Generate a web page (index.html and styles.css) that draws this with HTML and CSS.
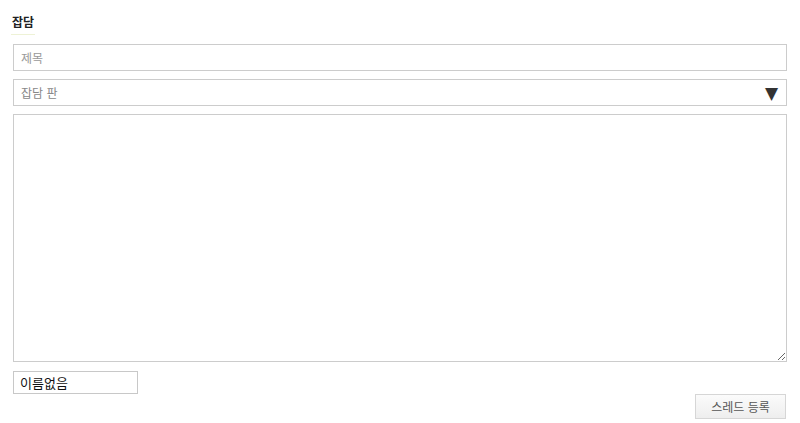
FILE: index.html
```html
<!DOCTYPE html>
<html lang="ko">
<head>
<meta charset="utf-8">
<link rel="stylesheet" href="styles.css">
</head>
<body>
<div class="wrap">
  <div class="title"><span>잡담</span></div>
  <form class="form">
    <input class="field" type="text" placeholder="제목">
    <div class="select">
      <span class="select-text">잡담 판</span>
      <span class="arrow">▼</span>
    </div>
    <textarea class="area"></textarea>
    <input class="name" type="text" value="이름없음">
    <div class="actions">
      <button type="button" class="btn">스레드 등록</button>
    </div>
  </form>
</div>
</body>
</html>
```
FILE: styles.css
```css
html, body {
  margin: 0;
  padding: 0;
  background: #fff;
  font-family: "Noto Sans CJK KR", "Noto Sans", sans-serif;
}
.wrap {
  padding: 8px 13px 0 13px;
  width: 774px;
}
.title {
  margin-left: -2px;
  height: 24px;
}
.title span {
  display: inline-block;
  font-size: 12px;
  font-weight: bold;
  color: #222;
  line-height: 22px;
  padding: 0 1px 1px 1px;
  border-bottom: 1px solid #eef2d6;
}
.form {
  display: flex;
  flex-direction: column;
  margin-top: 12px;
}
.field, .select, .area, .name {
  box-sizing: border-box;
  border: 1px solid #cccccc;
  font-family: "Noto Sans CJK KR", "Noto Sans", sans-serif;
  font-size: 12px;
  outline: none;
}
.field {
  width: 774px;
  height: 27px;
  padding: 0 7px;
  color: #333;
}
.field::placeholder { color: #999; }
.select {
  margin-top: 8px;
  width: 774px;
  height: 27px;
  display: flex;
  align-items: center;
  justify-content: space-between;
  padding: 0 8px 0 7px;
  color: #888;
}
.arrow {
  color: #333;
  font-size: 17px;
  font-family: "DejaVu Sans", sans-serif;
  line-height: 1;
  margin-top: 1px;
}
.area {
  margin-top: 8px;
  width: 774px;
  height: 248px;
  resize: vertical;
  padding: 4px;
}
.name {
  margin-top: 9px;
  width: 125px;
  height: 23px;
  padding: 0 6px;
  font-size: 13px;
  color: #111;
  border-color: #c8c8c8;
}
.actions {
  display: flex;
  justify-content: flex-end;
  margin-top: 0;
  margin-right: 1px;
}
.btn {
  width: 91px;
  height: 25px;
  border: 1px solid #d6d6d6;
  background: linear-gradient(#fbfbfb, #eeeeee);
  color: #555;
  font-family: "Noto Sans CJK KR", "Noto Sans", sans-serif;
  font-size: 12px;
  padding: 0;
}
```
